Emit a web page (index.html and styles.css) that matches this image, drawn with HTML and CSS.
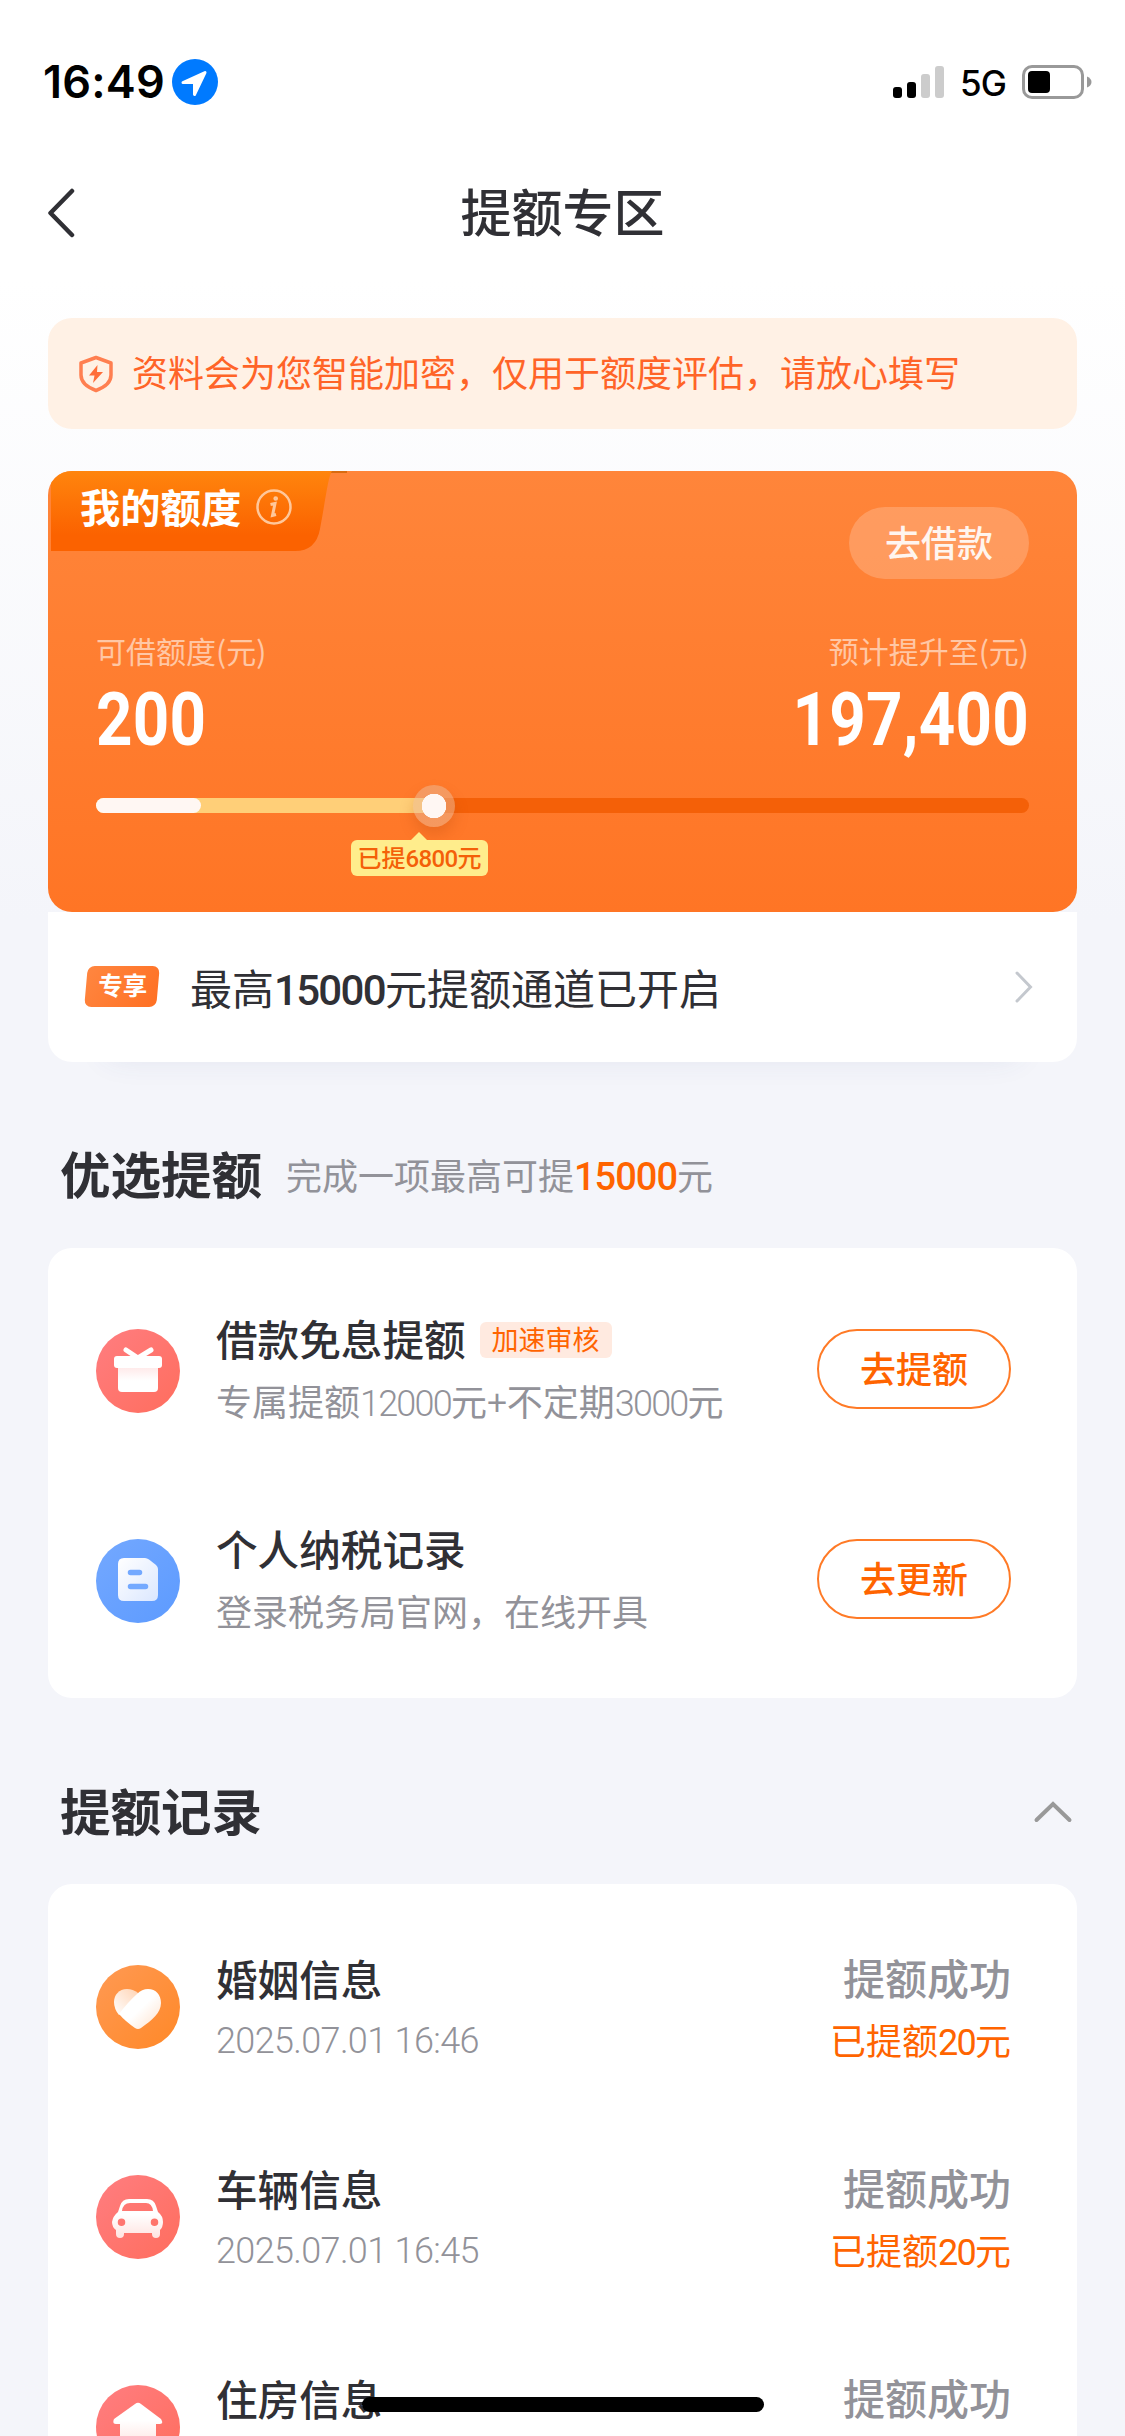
FILE: index.html
```html
<!DOCTYPE html>
<html lang="zh-CN">
<head>
<meta charset="utf-8">
<title>提额专区</title>
<link rel="stylesheet" href="styles.css">
</head>
<body>
<div class="page">
  <div class="status">
    <span class="time">16:49</span>
    <svg class="loc" width="46" height="46" viewBox="0 0 46 46"><circle cx="23" cy="23" r="23" fill="#007aff"/><path d="M11 23.600 33 13.500 22.500 35.500V23.600Z" fill="#fff" stroke="#fff" stroke-width="3" stroke-linejoin="round"/></svg>
    <span class="spacer"></span>
    <svg class="bars" width="52" height="32" viewBox="0 0 52 32"><rect y="21" width="9" height="11" rx="3"/><rect x="14" y="16" width="9" height="16" rx="3"/><rect x="28" y="8" width="9" height="24" rx="3" fill="#ccc"/><rect x="42" width="9" height="32" rx="3" fill="#ccc"/></svg>
    <span class="net">5G</span>
    <svg class="battery" width="70" height="34" viewBox="0 0 70 34"><rect x="1.500" y="1.500" width="59" height="31" rx="8.500" fill="none" stroke="#999" stroke-width="3"/><rect x="6" y="6" width="22" height="22" rx="4"/><path d="M65 11.500q4.500 2 4.500 5.500T65 22.500Z" fill="#999"/></svg>
  </div>
  <header class="nav">
    <svg class="back" width="30" height="50" viewBox="0 0 30 50"><path d="M24 3 2.500 25 24 47" fill="none" stroke="#303035" stroke-width="4.500" stroke-linecap="round" stroke-linejoin="round"/></svg>
    <h1>提额专区</h1>
  </header>

  <div class="notice">
    <svg width="36" height="38" viewBox="0 0 36 38" fill="none" stroke="#ff7f50" stroke-width="3.500" stroke-linejoin="round"><path d="M18 2.500 33 8V20q0 10-15 15.500Q3 30 3 20V8Z"/><path d="M19.500 10 11 20.500H16.500L15 28 25 17H19Z" fill="#ff6d39" stroke="none"/></svg>
    <span>资料会为您智能加密，仅用于额度评估，请放心填写</span>
  </div>

  <section class="quota">
    <div class="hero">
      <div class="hero-top">
        <div class="tab">
          <svg class="tab-bg" width="301" height="80" viewBox="0 0 301 80"><defs><linearGradient id="tabFill" x2="0" y2="1"><stop stop-color="#ff850d"/><stop offset=".8" stop-color="#fb6200"/></linearGradient></defs><path d="M279 0H296V2H278Z" fill="#d96b10"/><path d="M0 0H281C277 6 275 26 269 58Q265 80 244 80H0Z" fill="url(#tabFill)"/></svg>
          <span class="tab-name">我的额度</span>
          <svg class="info" width="36" height="36" viewBox="0 0 36 36" fill="none" stroke="#ffc79a" stroke-width="2.500"><circle cx="18" cy="18" r="16.500"/><path d="M14.500 15.500 19 14.500 16.500 26.500 20 25.500" stroke-width="3"/><circle cx="19.700" cy="9.500" r="1.100"/></svg>
        </div>
        <button class="borrow">去借款</button>
      </div>
      <div class="amounts">
        <div class="amount"><span class="label">可借额度(元)</span><b>200</b></div>
        <div class="amount right"><span class="label">预计提升至(元)</span><b>197,400</b></div>
      </div>
      <div class="track">
        <div class="raised"></div><div class="base"></div><div class="thumb"></div>
        <div class="tip">已提<i>6800</i>元</div>
      </div>
    </div>
    <div class="promo">
      <span class="badge"><em>专享</em></span>
      <span class="promo-text">最高<i>15000</i>元提额通道已开启</span>
      <svg width="18" height="32" viewBox="0 0 18 32"><path d="M2 2 15.500 16 2 30" fill="none" stroke="#c4c8ce" stroke-width="3" stroke-linecap="round"/></svg>
    </div>
  </section>

  <div class="section-head first">
    <h2>优选提额</h2>
    <p>完成一项最高可提<b>15000</b>元</p>
  </div>
  <section class="card picks">
    <div class="row">
      <svg class="icon" viewBox="0 0 84 84"><defs><linearGradient id="red" x2="1" y2="1"><stop offset=".15" stop-color="#ff7b7b"/><stop offset=".9" stop-color="#ff6f61"/></linearGradient><linearGradient id="box" x2="0" y2="1"><stop stop-color="#ffe9e9"/><stop offset=".55" stop-color="#fff"/></linearGradient></defs><circle cx="42" cy="42" r="42" fill="url(#red)"/><path d="M22 38H62V59Q62 63 58 63H26Q22 63 22 59Z" fill="url(#box)"/><rect x="18" y="27" width="48" height="12" rx="3" fill="#fff"/><path d="M30 21 42 29 55 21" fill="none" stroke="#fff" stroke-width="5" stroke-linecap="round"/></svg>
      <div class="info-col">
        <div class="title">借款免息提额<span class="tag">加速审核</span></div>
        <div class="sub">专属提额<i>12000</i>元+不定期<i>3000</i>元</div>
      </div>
      <button class="action">去提额</button>
    </div>
    <div class="row">
      <svg class="icon" viewBox="0 0 84 84"><defs><linearGradient id="blue" x2="1" y2="1"><stop offset=".15" stop-color="#70a6ff"/><stop offset=".9" stop-color="#5f9cff"/></linearGradient><linearGradient id="doc" x2="1" y2="1"><stop stop-color="#fff"/><stop offset="1" stop-color="#dbe7ff"/></linearGradient></defs><circle cx="42" cy="42" r="42" fill="url(#blue)"/><path d="M28 19H49Q51 19 53 20.500L60 26Q62 28 62 30V56Q62 62 56 62H28Q22 62 22 56V25Q22 19 28 19Z" fill="url(#doc)"/><path d="M34.500 33.500H43.500M34.500 47.500H49.500" stroke="#74a9ff" stroke-width="5.500" stroke-linecap="round"/></svg>
      <div class="info-col">
        <div class="title">个人纳税记录</div>
        <div class="sub">登录税务局官网，在线开具</div>
      </div>
      <button class="action">去更新</button>
    </div>
  </section>

  <div class="section-head second">
    <h2>提额记录</h2>
    <svg width="40" height="24" viewBox="0 0 40 24"><path d="M3.500 20 20 4 36.500 20" fill="none" stroke="#999" stroke-width="4" stroke-linecap="round"/></svg>
  </div>
  <section class="card records">
    <div class="row">
      <svg class="icon" viewBox="0 0 84 84"><defs><linearGradient id="orange" x2="1" y2="1"><stop offset=".15" stop-color="#ff974d"/><stop offset=".9" stop-color="#ff8a2c"/></linearGradient><linearGradient id="lobe" x1="1" x2="0" y2="1"><stop stop-color="#ffd4b5"/><stop offset="1" stop-color="#fff"/></linearGradient><linearGradient id="heart" x2="1" y2="1"><stop offset=".5" stop-color="#fff"/><stop offset="1" stop-color="#ffe1cb"/></linearGradient></defs><circle cx="42" cy="42" r="42" fill="url(#orange)"/><path d="M42 28Q37 24 31 24C23 24 18 30 18 37Q18 44 23 50L42 36Z" fill="url(#lobe)"/><path d="M23 49Q32 37 41 29Q46 24 52 24C60 24 65 30 65 38C65 48 56 55 45 63Q42 65 39 63Q29 56 23 49Z" fill="url(#heart)"/></svg>
      <div class="info-col"><div class="title">婚姻信息</div><div class="sub date">2025.07.01 16:46</div></div>
      <div class="result"><div class="state">提额成功</div><div class="gain">已提额<i>20</i>元</div></div>
    </div>
    <div class="row">
      <svg class="icon" viewBox="0 0 84 84"><defs><linearGradient id="car" x2="0" y2="1"><stop offset=".4" stop-color="#fff"/><stop offset="1" stop-color="#ffe3e0"/></linearGradient></defs><circle cx="42" cy="42" r="42" fill="url(#red)"/><path fill="url(#car)" fill-rule="evenodd" d="M33 24H51Q58 24 60 31L62 37Q67 41 67 47Q67 52 64 55V59Q64 63 60 63T56 59V58H28V59Q28 63 24 63T20 59V55Q16 52 16 47Q17 41 22 37L24 31Q26 24 33 24ZM26 36H57Q56 28 50 28H34Q27 28 26 36ZM25.500 43.500A3.700 3.700 0 1 0 25.500 51A3.700 3.700 0 1 0 25.500 43.500ZM58.500 43.500A3.700 3.700 0 1 0 58.500 51A3.700 3.700 0 1 0 58.500 43.500Z"/></svg>
      <div class="info-col"><div class="title">车辆信息</div><div class="sub date">2025.07.01 16:45</div></div>
      <div class="result"><div class="state">提额成功</div><div class="gain">已提额<i>20</i>元</div></div>
    </div>
    <div class="row">
      <svg class="icon" viewBox="0 0 84 84"><circle cx="42" cy="42" r="42" fill="url(#red)"/><path d="M39 19Q42 16.500 45 19L65 34Q68 39 64 39H60V62H24V39H20Q16 39 18 34Z" fill="url(#car)"/></svg>
      <div class="info-col"><div class="title">住房信息</div></div>
      <div class="result"><div class="state">提额成功</div></div>
    </div>
  </section>
  <div class="home-bar"></div>
</div>
</body>
</html>
```
FILE: styles.css
```css
* { box-sizing: border-box; margin: 0; padding: 0; }
body {
  width: 1125px;
  height: 2436px;
  overflow: hidden;
  font-family: "Noto Sans CJK SC", sans-serif;
  color: #303035;
}
i, em { font-style: normal; }
i, .date { font-family: Roboto, "Noto Sans CJK SC", sans-serif; }
i { line-height: 1; }
svg { display: block; flex: none; }
button { font: inherit; border: 0; background: none; }
.page {
  position: relative;
  height: 2436px;
  overflow: hidden;
  padding: 0 48px;
  background: linear-gradient(#fff 280px, #f4f5fa 920px);
}
.spacer { flex: 1; }

.status {
  display: flex;
  align-items: center;
  height: 164px;
  margin: 0 -15px 0 -5px;
  color: #000;
}
.time { width: 124px; font: 600 45px/50px Inter, sans-serif; letter-spacing: .2px; white-space: nowrap; }
.loc { margin-left: 5px; }
.net { margin: 2px 16px 0 15px; width: 46px; font: 500 35px/40px Inter, sans-serif; letter-spacing: -1px; }

.nav { display: flex; align-items: center; justify-content: center; height: 98px; position: relative; }
.back { position: absolute; left: 0; top: 24px; }
h1 { font-size: 51px; line-height: 70px; font-weight: 500; margin-top: -6px; }

.notice {
  display: flex;
  align-items: center;
  gap: 18px;
  height: 111px;
  margin-top: 56px;
  padding-left: 30px;
  border-radius: 24px;
  background: #fff1e5;
  color: #ff6428;
  font-size: 36px;
  line-height: 50px;
}
.notice span { margin-top: -5px; }

.quota {
  margin-top: 42px;
  height: 591px;
  border-radius: 24px;
  background: linear-gradient(transparent 441px, #fff 441px);
  box-shadow: 0 54px 30px -60px rgba(60, 70, 140, .12);
}
.hero {
  height: 441px;
  border-radius: 24px;
  overflow: hidden;
  color: #fff;
  background: linear-gradient(#ff853a, #ff7525);
}
.hero-top { display: flex; justify-content: space-between; height: 162px; padding: 0 48px 0 3px; }
.tab { position: relative; display: flex; align-items: flex-start; gap: 15px; width: 301px; height: 80px; padding: 6px 0 0 29px; }
.tab-bg { position: absolute; left: 0; top: 0; }
.tab-name { position: relative; font-size: 40.300px; line-height: 58px; font-weight: 700; }
.info { position: relative; margin-top: 12px; }
.borrow {
  width: 180px; height: 72px; margin-top: 36px;
  border-radius: 36px; background: rgba(255, 255, 255, .2);
  color: #fff5ef; font-size: 36px; line-height: 50px; padding-bottom: 5px; font-weight: 500;
}
.amounts { display: flex; justify-content: space-between; height: 165px; padding: 0 48px; }
.amount { display: flex; flex-direction: column; align-items: flex-start; margin-top: -2px; }
.amount.right { align-items: flex-end; }
.label { font-size: 30px; line-height: 38px; color: #ffc7a5; }
.amount b { font: 700 74px/86px Roboto, sans-serif; margin-top: 8px; transform: scaleX(.86); transform-origin: 0 50%; letter-spacing: .3px; }
.amount.right b { transform-origin: 100% 50%; }
.track { position: relative; height: 15px; margin: 0 48px; border-radius: 8px; background: #f46008; }
.raised { position: absolute; left: 0; top: 0; width: 337px; height: 15px; border-radius: 8px; background: #ffcf78; }
.base { position: absolute; left: 0; top: 0; width: 105px; height: 15px; border-radius: 8px; background: #fff7f3; }
.thumb {
  position: absolute; left: 317px; top: -13px; width: 42px; height: 42px; border-radius: 50%;
  background: radial-gradient(circle, #fff7f3 12px, rgba(235, 185, 150, .5) 12.5px);
  box-shadow: 0 8px 14px rgba(180, 70, 10, .25);
}
.tip {
  position: absolute; left: 255px; top: 42px; width: 137px; height: 36px; border-radius: 6px;
  background: #ffed8c; color: #f46008; font-size: 24px; line-height: 34px; font-weight: 500; text-align: center;
}
.tip i { letter-spacing: -.6px; }
.tip::before {
  content: ""; position: absolute; left: 60px; top: -8px;
  border: solid transparent; border-width: 0 8px 8px; border-bottom-color: #ffed8c;
}
.promo { display: flex; align-items: center; height: 150px; padding: 0 44px 0 38px; }
.badge {
  display: flex; justify-content: center; align-items: center;
  width: 72px; height: 41px; margin-top: -1px; border-radius: 7px; transform: skewX(-5deg);
  background: linear-gradient(120deg, #ff8640, #ff7023);
}
.badge em { color: #fff; font-size: 24.500px; line-height: 36px; font-weight: 700; transform: skewX(5deg); margin-top: -3px; }
.promo-text { flex: 1; margin-left: 32px; font-size: 42px; line-height: 60px; }
.promo-text i { font-weight: 500; letter-spacing: -1.700px; }

.section-head { display: flex; align-items: center; }
h2 { font-size: 50.500px; line-height: 72px; font-weight: 700; margin-top: -7px; }
.first { height: 186px; padding: 41px 0 0 12px; gap: 24px; }
.first p { font-size: 36px; line-height: 54px; color: #929299; margin-top: -3px; }
.first b { font: 500 38px/1 Roboto, sans-serif; color: #ff6400; letter-spacing: -1px; }
.second { height: 186px; padding: 42px 4px 0 12px; justify-content: space-between; }

.card { background: #fff; border-radius: 24px; padding: 18px 66px 12px 48px; }
.records { height: 700px; }
.row { display: flex; align-items: center; height: 210px; }
.icon { width: 84px; height: 84px; }
.info-col { flex: 1; height: 113px; margin-left: 36px; }
.title { display: flex; align-items: center; font-size: 41.600px; line-height: 60px; font-weight: 500; }
.picks .title { margin-top: -7px; }
.records .title { margin-top: -3px; }
.tag {
  margin: 4px 0 0 14px; padding: 0 12px; border-radius: 6px; height: 36px;
  background: #ffeae0; color: #ff6400; font-size: 27px; line-height: 34px; font-weight: 400;
}
.sub { margin-top: 7px; font-size: 36px; line-height: 50px; color: #929299; white-space: nowrap; }
.sub i, .gain i { letter-spacing: -1.800px; }
.sub i { font-weight: 300; }
.date { font-weight: 300; letter-spacing: -.65px; margin-top: 8px; }
.action {
  width: 194px; height: 80px; border: 2px solid #ff7a26; border-radius: 40px; margin-top: -4px;
  padding-bottom: 5px; color: #ff6400; font-size: 36px; line-height: 50px; font-weight: 500;
}
.result { height: 115px; text-align: right; margin-top: -6px; }
.state { font-size: 42px; line-height: 60px; font-weight: 500; color: #929299; }
.gain { margin-top: 7px; font-size: 36px; line-height: 50px; color: #ff6400; }
.home-bar { position: absolute; left: 362px; top: 2397px; width: 402px; height: 15px; border-radius: 8px; background: #000; }
```
